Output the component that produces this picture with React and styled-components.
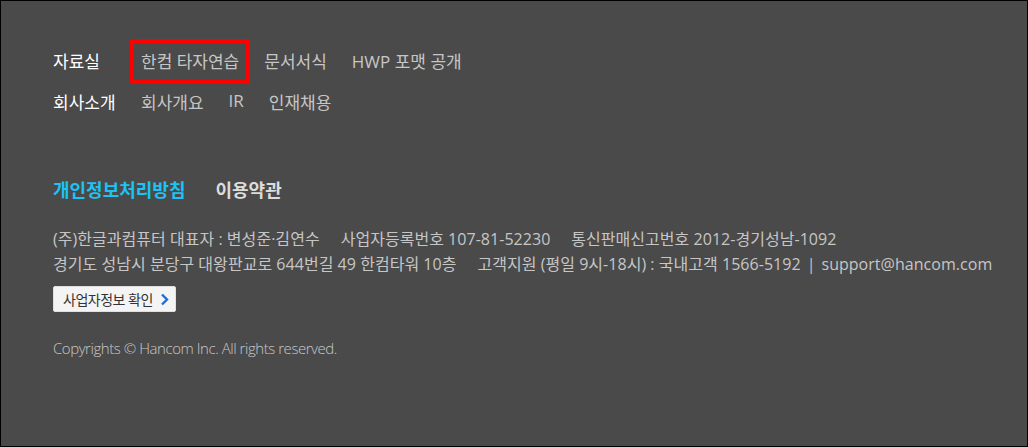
import React from "react";
import styled, { createGlobalStyle } from "styled-components";

const Global = createGlobalStyle`
  html, body { margin: 0; padding: 0; background: #4a4a4a; }
  * { box-sizing: border-box; }
`;

const Footer = styled.footer`
  width: 1028px;
  height: 447px;
  border: 1px solid #000;
  background: #4a4a4a;
  padding: 49px 52px 0;
  font-family: "Open Sans", "Noto Sans CJK KR", sans-serif;
  color: #c4c4c4;
`;

const Nav = styled.nav`
  display: flex;
  flex-direction: column;
  gap: 21px;
`;

const NavRow = styled.div`
  display: flex;
  align-items: center;
  height: 20px;
  font-size: 17px;
  letter-spacing: 0;
`;

const NavLabel = styled.span`
  width: 88px;
  flex: none;
  color: #ffffff;
`;

const NavLinks = styled.div`
  display: flex;
  gap: 25px;
`;

const NavLink = styled.a`
  position: relative;
  color: #c6c6c6;
  text-decoration: none;
  &::after {
    content: "";
    display: ${(p) => (p.$highlight ? "block" : "none")};
    position: absolute;
    top: -9px;
    left: -11px;
    right: -11px;
    bottom: -11px;
    border: 4px solid #ff0000;
    border-radius: 2px;
  }
`;

const PolicyRow = styled.div`
  display: flex;
  gap: 30px;
  margin-top: 67px;
  height: 22px;
  align-items: center;
  font-size: 18px;
  font-weight: 700;
  letter-spacing: 0;
`;

const PolicyLink = styled.a`
  color: ${(p) => (p.$accent ? "#1cc3f4" : "#dcdcdc")};
  text-decoration: none;
`;

const Info = styled.div`
  margin-top: 27px;
  font-size: 16px;
  line-height: 25px;
  letter-spacing: 0.035px;
  color: #c6c6c6;
`;

const InfoLine = styled.p`
  margin: 0;
  display: flex;
  gap: 21px;
  white-space: nowrap;
`;

const Sep = styled.span`
  margin: 0 6px;
`;

const CheckButton = styled.button`
  display: flex;
  align-items: center;
  gap: 7px;
  margin-top: 9px;
  height: 26px;
  padding: 0 6px 0 9px;
  background: #f4f4f4;
  border: 1px solid #e0e0e0;
  border-radius: 2px;
  font-family: "Open Sans", "Noto Sans CJK KR", sans-serif;
  font-size: 14px;
  letter-spacing: -0.5px;
  color: #333;
  cursor: pointer;
`;

const Copyright = styled.p`
  margin: 26px 0 0;
  font-size: 15px;
  line-height: 20px;
  letter-spacing: -0.45px;
  color: #c8c8c8;
  font-weight: 300;
`;

export default function App() {
  return (
    <>
      <Global />
      <Footer>
        <Nav>
          <NavRow>
            <NavLabel>자료실</NavLabel>
            <NavLinks>
              <NavLink $highlight>한컴 타자연습</NavLink>
              <NavLink>문서서식</NavLink>
              <NavLink>HWP 포맷 공개</NavLink>
            </NavLinks>
          </NavRow>
          <NavRow>
            <NavLabel>회사소개</NavLabel>
            <NavLinks>
              <NavLink>회사개요</NavLink>
              <NavLink>IR</NavLink>
              <NavLink>인재채용</NavLink>
            </NavLinks>
          </NavRow>
        </Nav>
        <PolicyRow>
          <PolicyLink $accent>개인정보처리방침</PolicyLink>
          <PolicyLink>이용약관</PolicyLink>
        </PolicyRow>
        <Info>
          <InfoLine>
            <span>(주)한글과컴퓨터 대표자 : 변성준·김연수</span>
            <span>사업자등록번호 107-81-52230</span>
            <span>통신판매신고번호 2012-경기성남-1092</span>
          </InfoLine>
          <InfoLine>
            <span>경기도 성남시 분당구 대왕판교로 644번길 49 한컴타워 10층</span>
            <span>
              고객지원 (평일 9시-18시) : 국내고객 1566-5192<Sep>|</Sep>support@hancom.com
            </span>
          </InfoLine>
        </Info>
        <CheckButton>
          사업자정보 확인
          <svg width="9" height="13" viewBox="0 0 9 13">
            <path d="M2 1.5 L7 6.5 L2 11.5" fill="none" stroke="#1a6fd8" strokeWidth="2.4" />
          </svg>
        </CheckButton>
        <Copyright>Copyrights © Hancom Inc. All rights reserved.</Copyright>
      </Footer>
    </>
  );
}
